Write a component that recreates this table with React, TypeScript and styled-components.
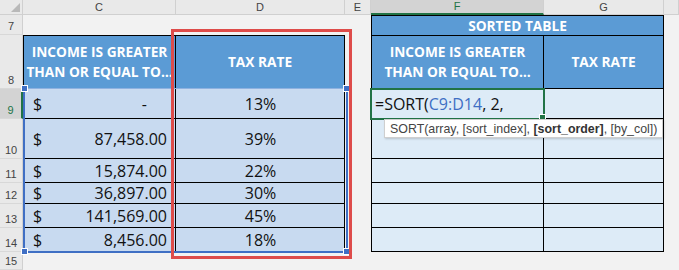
import React from "react";
import styled, { createGlobalStyle } from "styled-components";

const GlobalStyle = createGlobalStyle`
  html, body {
    margin: 0;
    padding: 0;
    background: #f2f2f2;
  }
`;

const Sheet = styled.div`
  position: relative;
  display: grid;
  grid-template-columns: 23px 153px 169px 26px 173px 120px 1fr;
  grid-template-rows: 15px 20px 54px 30px 40px 24px 21px 24px 24px 1fr;
  width: 679px;
  height: 270px;
  overflow: hidden;
  background: #f2f2f2;
  font-family: "Open Sans", sans-serif;
`;

const Corner = styled.div`
  position: relative;
  background: #e9e9e9;
  border-right: 1px solid #d0d0d0;
  border-bottom: 1px solid #d0d0d0;

  &::after {
    content: "";
    position: absolute;
    right: 2px;
    bottom: 2px;
    width: 0;
    height: 0;
    border-left: 9px solid transparent;
    border-bottom: 9px solid #b9b9b9;
  }
`;

const ColHead = styled.div<{ $active?: boolean }>`
  display: flex;
  align-items: center;
  justify-content: center;
  background: ${(p) => (p.$active ? "#d3d3d3" : "#e9e9e9")};
  border-right: 1px solid #d0d0d0;
  border-bottom: ${(p) => (p.$active ? "2px solid #217346" : "1px solid #d0d0d0")};
  color: ${(p) => (p.$active ? "#217346" : "#444")};
  font-family: "Liberation Sans", sans-serif;
  font-size: 11px;
  line-height: 1;
`;

const RowHead = styled.div<{ $active?: boolean }>`
  display: flex;
  align-items: flex-end;
  justify-content: center;
  padding-bottom: 2px;
  box-sizing: border-box;
  background: ${(p) => (p.$active ? "#d3d3d3" : "#e9e9e9")};
  border-right: ${(p) => (p.$active ? "2px solid #217346" : "1px solid #d0d0d0")};
  border-bottom: 1px solid #d8d8d8;
  color: ${(p) => (p.$active ? "#217346" : "#444")};
  font-family: "Liberation Sans", sans-serif;
  font-size: 11px;
  line-height: 1;
`;

const Blank = styled.div`
  background: #f2f2f2;
`;

const TitleCell = styled.div`
  grid-column: span 2;
  display: flex;
  align-items: center;
  justify-content: center;
  background: #5b9bd5;
  border: 1px solid #000;
  border-bottom: none;
  color: #fff;
  font-weight: 700;
  font-size: 13.7px;
`;

const HeadCell = styled.div<{ $first?: boolean }>`
  display: flex;
  align-items: center;
  justify-content: center;
  text-align: center;
  background: #5b9bd5;
  border-top: 1px solid #000;
  border-bottom: 1px solid #000;
  border-right: 1px solid #000;
  border-left: ${(p) => (p.$first ? "1px solid #000" : "none")};
  color: #fff;
  font-weight: 700;
  font-size: 13.7px;
  line-height: 20px;
`;

const DataCell = styled.div<{ $first?: boolean; $selected?: boolean; $center?: boolean }>`
  display: flex;
  align-items: center;
  justify-content: ${(p) => (p.$center ? "center" : "space-between")};
  padding: 0 8px 0 9px;
  box-sizing: border-box;
  background: ${(p) => (p.$selected ? "#c8daf0" : "#ddebf7")};
  border-bottom: 1px solid #000;
  border-right: 1px solid #000;
  border-left: ${(p) => (p.$first ? "1px solid #000" : "none")};
  color: #111;
  font-size: 16px;
  white-space: nowrap;
`;

const EditCell = styled(DataCell)`
  position: relative;
  z-index: 3;
  justify-content: flex-start;
  padding-left: 3px;
  outline: 2px solid #217346;
  outline-offset: -1px;

  &::after {
    content: "";
    position: absolute;
    right: -3px;
    bottom: -3px;
    width: 5px;
    height: 5px;
    background: #217346;
    border: 1px solid #fff;
  }
`;

const Amount = styled.span<{ $dash?: boolean }>`
  padding-right: ${(p) => (p.$dash ? "20px" : "0")};
`;

const Ref = styled.span`
  color: #3f6fc4;
`;

const RangeBox = styled.div`
  position: absolute;
  left: 23px;
  top: 88px;
  width: 321px;
  height: 162px;
  border: 2px solid #3f6fc4;
  border-top: 1px solid #8fb2e0;
  z-index: 2;
  pointer-events: none;
`;

const Handle = styled.span<{ $x: "left" | "right"; $y: "top" | "bottom" }>`
  position: absolute;
  width: 5px;
  height: 5px;
  background: #3f6fc4;
  border: 1px solid #fff;
  ${(p) => (p.$x === "left" ? "left: -4px;" : "right: -4px;")}
  ${(p) => (p.$y === "top" ? "top: -4px;" : "bottom: -4px;")}
`;

const RedBox = styled.div`
  position: absolute;
  left: 171px;
  top: 29px;
  width: 175px;
  height: 224px;
  border: 3px solid #de4c4a;
  z-index: 4;
  pointer-events: none;
`;

const Tooltip = styled.div`
  position: absolute;
  left: 384px;
  top: 119px;
  height: 17px;
  display: flex;
  align-items: center;
  padding: 0 5px;
  background: #fff;
  border: 1px solid #cfcfcf;
  box-shadow: 1px 1px 2px rgba(0, 0, 0, 0.18);
  color: #444;
  font-family: "Liberation Sans", sans-serif;
  font-size: 12.4px;
  white-space: nowrap;
  z-index: 5;

  b {
    color: #333;
  }
`;

const rows = [
  { n: 9, amount: "-", rate: "13%" },
  { n: 10, amount: "87,458.00", rate: "39%" },
  { n: 11, amount: "15,874.00", rate: "22%" },
  { n: 12, amount: "36,897.00", rate: "30%" },
  { n: 13, amount: "141,569.00", rate: "45%" },
  { n: 14, amount: "8,456.00", rate: "18%" },
];

const Header = () => (
  <>
    INCOME IS GREATER
    <br />
    THAN OR EQUAL TO…
  </>
);

export default function App() {
  return (
    <>
      <GlobalStyle />
      <Sheet>
        <Corner />
        <ColHead>C</ColHead>
        <ColHead>D</ColHead>
        <ColHead>E</ColHead>
        <ColHead $active>F</ColHead>
        <ColHead>G</ColHead>
        <ColHead />

        <RowHead>7</RowHead>
        <Blank />
        <Blank />
        <Blank />
        <TitleCell>SORTED TABLE</TitleCell>
        <Blank />

        <RowHead>8</RowHead>
        <HeadCell $first>
          <Header />
        </HeadCell>
        <HeadCell>TAX RATE</HeadCell>
        <Blank />
        <HeadCell $first>
          <Header />
        </HeadCell>
        <HeadCell>TAX RATE</HeadCell>
        <Blank />

        {rows.map((r) => (
          <React.Fragment key={r.n}>
            <RowHead $active={r.n === 9}>{r.n}</RowHead>
            <DataCell $first $selected>
              <span>$</span>
              <Amount $dash={r.amount === "-"}>{r.amount}</Amount>
            </DataCell>
            <DataCell $selected $center>
              {r.rate}
            </DataCell>
            <Blank />
            {r.n === 9 ? (
              <EditCell $first>
                =SORT(<Ref>C9:D14</Ref>, 2,
              </EditCell>
            ) : (
              <DataCell $first />
            )}
            <DataCell />
            <Blank />
          </React.Fragment>
        ))}

        <RowHead>15</RowHead>
        <Blank />
        <Blank />
        <Blank />
        <Blank />
        <Blank />
        <Blank />

        <RangeBox>
          <Handle $x="left" $y="top" />
          <Handle $x="right" $y="top" />
          <Handle $x="left" $y="bottom" />
          <Handle $x="right" $y="bottom" />
        </RangeBox>
        <RedBox />
        <Tooltip>
          SORT(array, [sort_index],&nbsp;<b>[sort_order]</b>, [by_col])
        </Tooltip>
      </Sheet>
    </>
  );
}
